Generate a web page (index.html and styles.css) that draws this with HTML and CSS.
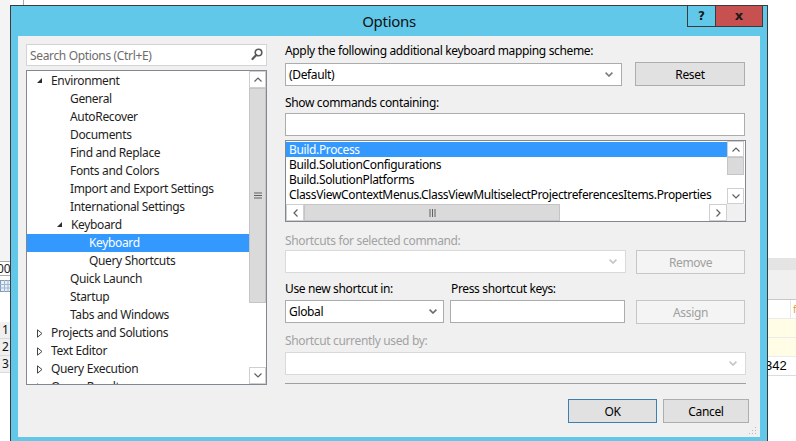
FILE: index.html
```html
<!DOCTYPE html>
<html>
<head>
<meta charset="utf-8">
<title>Options</title>
<link rel="stylesheet" href="styles.css">
</head>
<body>
<div class="desk">
  <div class="bg-left">
    <div class="bl-top"></div>
    <div class="bl-cell">00</div>
    <div class="bl-icon">
      <svg width="10" height="12" viewBox="0 0 10 12"><rect x="0.5" y="0.5" width="12" height="11" fill="#e8eef8" stroke="#7f9db9"/><path d="M0 4.5H10M0 8H10M4.5 0V12M8 0V12" stroke="#9fb5d0"/></svg>
    </div>
    <div class="bl-gap"></div>
    <div class="bl-row">1</div>
    <div class="bl-row">2</div>
    <div class="bl-row">3</div>
    <div class="bl-rest"></div>
  </div>

  <div class="wincol">
    <div class="topstrip"><div class="tick"></div></div>
    <div class="win">
      <div class="titlebar">
        <div></div>
        <div class="title">Options</div>
        <div class="capbtns">
          <div class="cap help">?</div>
          <div class="cap close">x</div>
        </div>
      </div>
      <div class="client">
        <div class="left">
          <div class="search">
            <span class="ph">Search Options (Ctrl+E)</span>
            <svg class="mag" width="12" height="13" viewBox="0 0 12 13"><circle cx="7.5" cy="4.5" r="3.3" fill="none" stroke="#5a5a5a" stroke-width="1.6"/><path d="M5.2 7L1.5 11" stroke="#5a5a5a" stroke-width="2.2" stroke-linecap="round"/></svg>
          </div>
          <div class="tree">
            <div class="titems">
              <div class="ti lv0"><span class="arr"><svg width="6" height="6" viewBox="0 0 6 6"><path d="M5 0V5H0Z" fill="#2e2e2e"/></svg></span>Environment</div>
              <div class="ti lv1">General</div>
              <div class="ti lv1">AutoRecover</div>
              <div class="ti lv1">Documents</div>
              <div class="ti lv1">Find and Replace</div>
              <div class="ti lv1">Fonts and Colors</div>
              <div class="ti lv1">Import and Export Settings</div>
              <div class="ti lv1">International Settings</div>
              <div class="ti lv1 hasarr"><span class="arr"><svg width="6" height="6" viewBox="0 0 6 6"><path d="M5 0V5H0Z" fill="#2e2e2e"/></svg></span>Keyboard</div>
              <div class="ti lv2 sel">Keyboard</div>
              <div class="ti lv2">Query Shortcuts</div>
              <div class="ti lv1">Quick Launch</div>
              <div class="ti lv1">Startup</div>
              <div class="ti lv1">Tabs and Windows</div>
              <div class="ti lv0"><span class="arr"><svg width="6" height="9" viewBox="0 0 6 9"><path d="M0.5 0.8L5 4.5L0.5 8.2Z" fill="none" stroke="#444"/></svg></span>Projects and Solutions</div>
              <div class="ti lv0"><span class="arr"><svg width="6" height="9" viewBox="0 0 6 9"><path d="M0.5 0.8L5 4.5L0.5 8.2Z" fill="none" stroke="#444"/></svg></span>Text Editor</div>
              <div class="ti lv0"><span class="arr"><svg width="6" height="9" viewBox="0 0 6 9"><path d="M0.5 0.8L5 4.5L0.5 8.2Z" fill="none" stroke="#444"/></svg></span>Query Execution</div>
              <div class="ti lv0"><span class="arr"><svg width="6" height="9" viewBox="0 0 6 9"><path d="M0.5 0.8L5 4.5L0.5 8.2Z" fill="none" stroke="#444"/></svg></span>Query Results</div>
            </div>
            <div class="vscroll tall">
              <div class="sbtn"><svg width="8" height="5" viewBox="0 0 8 5"><path d="M0.5 4.5L4 1L7.5 4.5" fill="none" stroke="#606060" stroke-width="1.2"/></svg></div>
              <div class="thumb tthumb"><svg width="8" height="7" viewBox="0 0 8 7"><path d="M0 1H8M0 3.5H8M0 6H8" stroke="#606060"/></svg></div>
              <div class="track"></div>
              <div class="sbtn"><svg width="8" height="5" viewBox="0 0 8 5"><path d="M0.5 0.5L4 4L7.5 0.5" fill="none" stroke="#606060" stroke-width="1.2"/></svg></div>
            </div>
          </div>
        </div>

        <div class="right">
          <div class="lbl lab1">Apply the following additional keyboard mapping scheme:</div>
          <div class="row r1">
            <div class="combo c1"><span>(Default)</span><svg class="chev" width="8" height="5" viewBox="0 0 8 5"><path d="M0.6 0.6L4 4L7.4 0.6" fill="none" stroke="#7a7a7a" stroke-width="1.6"/></svg></div>
            <div class="btn">Reset</div>
          </div>
          <div class="lbl lab2">Show commands containing:</div>
          <div class="input i1"></div>
          <div class="listbox">
            <div class="lb-main">
              <div class="lb-items">
                <div class="li sel">Build.Process</div>
                <div class="li">Build.SolutionConfigurations</div>
                <div class="li">Build.SolutionPlatforms</div>
                <div class="li">ClassViewContextMenus.ClassViewMultiselectProjectreferencesItems.Properties</div>
              </div>
              <div class="vscroll small">
                <div class="sbtn"><svg width="8" height="5" viewBox="0 0 8 5"><path d="M0.5 4.5L4 1L7.5 4.5" fill="none" stroke="#606060" stroke-width="1.2"/></svg></div>
                <div class="thumb sthumb"></div>
                <div class="track"></div>
                <div class="sbtn"><svg width="8" height="5" viewBox="0 0 8 5"><path d="M0.5 0.5L4 4L7.5 0.5" fill="none" stroke="#606060" stroke-width="1.2"/></svg></div>
              </div>
            </div>
            <div class="lb-bottom">
              <div class="hscroll">
                <div class="hbtn"><svg width="5" height="8" viewBox="0 0 5 8"><path d="M4.5 0.5L1 4L4.5 7.5" fill="none" stroke="#606060" stroke-width="1.2"/></svg></div>
                <div class="hthumb"><svg width="7" height="8" viewBox="0 0 7 8"><path d="M1 0V8M3.5 0V8M6 0V8" stroke="#606060"/></svg></div>
                <div class="htrack"></div>
                <div class="hbtn"><svg width="5" height="8" viewBox="0 0 5 8"><path d="M0.5 0.5L4 4L0.5 7.5" fill="none" stroke="#606060" stroke-width="1.2"/></svg></div>
              </div>
              <div class="corner"></div>
            </div>
          </div>
          <div class="lbl lab3 dis">Shortcuts for selected command:</div>
          <div class="row r2">
            <div class="combo c2 disc"><span></span><svg class="chev" width="8" height="5" viewBox="0 0 8 5"><path d="M0.6 0.6L4 4L7.4 0.6" fill="none" stroke="#c4c4c4" stroke-width="1.6"/></svg></div>
            <div class="btn dbtn">Remove</div>
          </div>
          <div class="row lrow">
            <div class="lbl lw1">Use new shortcut in:</div>
            <div class="lbl">Press shortcut keys:</div>
          </div>
          <div class="row r3">
            <div class="combo c3"><span>Global</span><svg class="chev" width="8" height="5" viewBox="0 0 8 5"><path d="M0.6 0.6L4 4L7.4 0.6" fill="none" stroke="#6a6a6a" stroke-width="1.6"/></svg></div>
            <div class="input i2"></div>
            <div class="btn dbtn">Assign</div>
          </div>
          <div class="lbl lab4 dis">Shortcut currently used by:</div>
          <div class="combo c4 disc"><span></span><svg class="chev" width="8" height="5" viewBox="0 0 8 5"><path d="M0.6 0.6L4 4L7.4 0.6" fill="none" stroke="#c4c4c4" stroke-width="1.6"/></svg></div>
          <div class="sep"></div>
          <div class="row okrow">
            <div class="btn ok">OK</div>
            <div class="btn cancel">Cancel</div>
          </div>
          <div class="grip"><svg width="8" height="8" viewBox="0 0 8 8"><g fill="#b8b8b8"><rect x="6" y="0" width="1" height="1"/><rect x="3" y="3" width="1" height="1"/><rect x="6" y="3" width="1" height="1"/><rect x="0" y="6" width="1" height="1"/><rect x="3" y="6" width="1" height="1"/><rect x="6" y="6" width="1" height="1"/></g></svg></div>
        </div>
      </div>
    </div>
  </div>

  <div class="bg-right">
    <div class="br-top"></div>
    <div class="br-band"></div>
    <div class="br-head"></div>
    <div class="br-row hdr"><span class="cellmark">f</span></div>
    <div class="br-row yel"></div>
    <div class="br-row yel"></div>
    <div class="br-row num">342</div>
    <div class="br-rest"></div>
  </div>
</div>
</body>
</html>
```

FILE: styles.css
```css
* { box-sizing: border-box; }
html, body { margin: 0; padding: 0; }
body {
  width: 796px;
  height: 441px;
  overflow: hidden;
  background: #fff;
  font-family: "Segoe UI", "Noto Sans", "Open Sans", sans-serif;
  font-size: 12px;
  letter-spacing: -0.35px;
  color: #000;
}
.desk { display: flex; height: 441px; }

/* background application, left */
.bg-left { width: 10px; flex: none; display: flex; flex-direction: column; overflow: hidden; letter-spacing: 0; }
.bl-top { height: 261px; background: #f4f4f4; }
.bl-cell { height: 15px; border: 1px solid #a9a9a9; border-left: none; border-right: none; background: #fff; line-height: 13px; text-indent: -3px; font-size: 12px; color: #222; white-space: nowrap; }
.bl-icon { height: 20px; padding-top: 4px; background: #fff; }
.bl-icon svg { display: block; }
.bl-gap { height: 26px; background: #fff; }
.bl-row { height: 17px; line-height: 16px; background: #f0f0f0; border-bottom: 1px solid #dadada; padding-left: 2px; font-size: 12px; color: #111; }
.bl-rest { flex: 1; background: #fff; }

/* background application, right */
.bg-right { flex: 1; display: flex; flex-direction: column; overflow: hidden; letter-spacing: 0; }
.br-top { height: 258px; background: #fff; }
.br-band { height: 12px; background: #e4e4e4; }
.br-head { height: 30px; background: #f0f0f0; border-bottom: 1px solid #c8c8c8; }
.br-row { height: 19px; border-bottom: 1px solid #ececec; background: #fff; }
.br-row.hdr { background: linear-gradient(to right, #fff 22px, #e6e6e6 22px, #e6e6e6 23px, #fff 23px); }
.cellmark { display: block; padding-left: 25px; color: #e0a030; font-size: 10px; line-height: 18px; }
.br-row.yel { background: #fffde6; }
.br-row.num { line-height: 18px; text-indent: -3px; white-space: nowrap; font-family: "Liberation Sans", sans-serif; font-size: 13px; border-bottom-color: #dcdcdc; }
.br-rest { flex: 1; background: #fff; }

/* window */
.wincol { width: 758px; flex: none; display: flex; flex-direction: column; }
.topstrip { height: 5px; background: #fff; }
.tick { margin-left: 13px; width: 1px; height: 5px; background: #a8a8a8; }
.win {
  flex: 1;
  border: 1px solid #3b3b3b;
  border-bottom: none;
  background: #62c8ea;
  display: flex;
  flex-direction: column;
  padding: 0 7px;
}
.titlebar {
  height: 30px;
  margin: 0 -7px;
  display: grid;
  grid-template-columns: 1fr auto 1fr;
  align-items: center;
}
.title { font-size: 15px; color: #111; letter-spacing: -0.3px; }
.capbtns { justify-self: end; align-self: start; display: flex; margin-top: -1px; margin-right: 4px; }
.cap { height: 22px; border: 1px solid #3b3b3b; display: flex; align-items: center; justify-content: center; font-family: "DejaVu Sans", sans-serif; font-weight: bold; color: #1a1a1a; letter-spacing: 0; }
.help { width: 29px; font-size: 12px; }
.close { width: 47px; border-left: none; background: #c75050; font-size: 13px; padding-bottom: 2px; }

.client {
  height: 401px;
  background: #f0f0f0;
  display: flex;
  padding: 8px 0 0 8px;
}

/* left panel */
.left { width: 241px; flex: none; }
.search {
  height: 22px;
  border: 1px solid #d4d4d4;
  background: #fff;
  display: flex;
  align-items: center;
  justify-content: space-between;
  padding: 0 3px 0 3px;
}
.ph { color: #6d6d6d; }
.mag { display: block; margin-top: -1px; }
.tree {
  margin-top: 4px;
  height: 315px;
  border: 1px solid #828790;
  background: #fff;
  display: flex;
  overflow: hidden;
}
.titems { width: 222px; flex: none; padding-top: 1px; overflow: hidden; }
.ti { height: 18px; line-height: 18px; white-space: nowrap; color: #1e1e1e; display: flex; align-items: center; }
.ti.lv0 { padding-left: 10px; }
.ti.lv1 { padding-left: 43px; }
.ti.lv1.hasarr { padding-left: 30px; }
.ti.lv2 { padding-left: 62px; }
.ti .arr { width: 14px; flex: none; display: flex; align-items: center; }
.ti .arr svg { display: block; }
.ti.sel { background: #3399ff; color: #fff; }

.vscroll { flex: none; display: flex; flex-direction: column; background: #fff; }
.vscroll.tall { width: 17px; }
.sbtn {
  height: 17px;
  flex: none;
  border: 1px solid #cfcfcf;
  background: #fff;
  display: flex;
  align-items: center;
  justify-content: center;
}
.sbtn svg { display: block; }
.thumb { flex: none; background: #dadada; border: 1px solid #c5c5c5; display: flex; align-items: center; justify-content: center; }
.tthumb { height: 215px; }
.track { flex: 1; }

/* right panel */
.right { width: 461px; flex: none; margin-left: 18px; display: flex; flex-direction: column; }
.lbl { line-height: 16px; height: 16px; white-space: nowrap; }
.lbl.dis { color: #a2a2a2; }
.lab1 { margin-top: -1px; }
.row { display: flex; flex: none; }
.r1 { margin-top: 3px; height: 24px; justify-content: space-between; }
.combo {
  height: 23px;
  flex: none;
  border: 1px solid #acacac;
  background: #fff;
  display: flex;
  align-items: center;
  justify-content: space-between;
  padding: 0 8px 0 3px;
}
.combo .chev { display: block; }
.combo.disc { border-color: #d9d9d9; }
.c1 { width: 337px; margin-top: 1px; }
.btn {
  height: 24px;
  flex: none;
  border: 1px solid #adadad;
  background: #e1e1e1;
  display: flex;
  align-items: center;
  justify-content: center;
  color: #000;
}
.r1 .btn { width: 110px; margin-right: 1px; }
.lab2 { margin-top: 9px; }
.input { height: 23px; flex: none; border: 1px solid #acacac; background: #fff; }
.i1 { margin-top: 2px; margin-right: 1px; }

.listbox {
  margin-top: 4px;
  height: 82px;
  flex: none;
  border: 1px solid #828790;
  background: #fff;
  display: flex;
  flex-direction: column;
}
.lb-main { height: 63px; display: flex; }
.lb-items { width: 441px; flex: none; overflow: hidden; padding-top: 1px; }
.li { height: 15px; line-height: 15px; padding-left: 3px; white-space: nowrap; }
.li.sel { background: #3399ff; color: #fff; }
.vscroll.small { width: 17px; }
.vscroll.small .sbtn { height: 16px; }
.sthumb { height: 18px; }
.lb-bottom { flex: 1; display: flex; }
.hscroll { width: 441px; flex: none; display: flex; }
.hbtn { width: 18px; flex: none; border: 1px solid #cfcfcf; background: #fff; display: flex; align-items: center; justify-content: center; }
.hbtn svg { display: block; }
.hthumb { width: 256px; flex: none; background: #dadada; border: 1px solid #c5c5c5; display: flex; align-items: center; justify-content: center; }
.hthumb svg { display: block; }
.htrack { flex: 1; background: #fff; }
.corner { flex: 1; background: #f0f0f0; }

.lab3 { margin-top: 11px; }
.r2 { margin-top: 1px; height: 24px; justify-content: space-between; }
.c2 { width: 341px; }
.r2 .dbtn, .r3 .dbtn { width: 109px; margin-right: 1px; }
.dbtn { background: #f4f4f4; border-color: #c6c6c6; color: #a0a0a0; }
.lrow { margin-top: 7px; }
.lw1 { width: 166px; }
.r3 { margin-top: 3px; height: 24px; }
.c3 { width: 159px; padding-right: 6px; }
.i2 { width: 175px; margin-left: 6px; }
.r3 .dbtn { margin-left: auto; }
.lab4 { margin-top: 9px; }
.c4 { margin-top: 3px; }
.sep { margin-top: 8px; height: 1px; flex: none; background: #a0a0a0; }
.okrow { margin-top: 15px; justify-content: flex-end; margin-right: -3px; }
.ok { width: 89px; border-color: #3c7fb1; }
.cancel { width: 86px; margin-left: 6px; }
.grip { align-self: flex-end; margin-top: 4px; margin-right: -11px; }
.grip svg { display: block; }
```
